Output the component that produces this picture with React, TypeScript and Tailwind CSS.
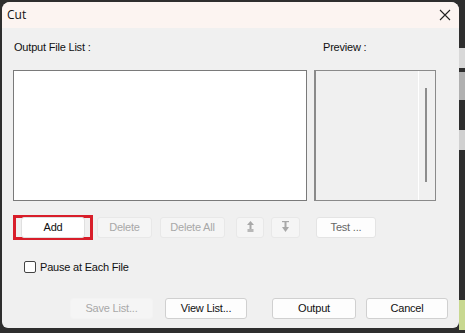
import React from "react";

const font = { fontFamily: '"Liberation Sans", Arial, sans-serif' };

function Btn({
  children,
  disabled,
  className = "",
}: {
  children?: React.ReactNode;
  disabled?: boolean;
  className?: string;
}) {
  return (
    <div
      className={`flex h-[21px] items-center justify-center rounded-[3px] border text-[11px] tracking-[-0.2px] ${
        disabled
          ? "border-[#e8e8e8] bg-[#f5f5f5] text-[#a8a8a8]"
          : "border-[#d0d0d0] bg-[#fdfdfd] text-[#111]"
      } ${className}`}
    >
      {children}
    </div>
  );
}

export default function App() {
  return (
    <div
      className="relative h-[333px] w-[465px] overflow-hidden bg-[#2e2e2e]"
      style={font}
    >
      {/* background desktop bits on the right */}
      <div className="absolute right-0 top-[48px] h-[20px] w-[6px] bg-[#d8d8d8]" />
      <div className="absolute right-0 top-[72px] h-[28px] w-[6px] bg-[#b0b0b0]" />
      <div className="absolute right-0 top-[130px] h-[20px] w-[6px] bg-[#d0d0d0]" />
      <div className="absolute right-0 top-[300px] h-[30px] w-[6px] bg-[#c8d890]" />

      <div className="absolute left-[2px] top-[2px] flex h-[326px] w-[457px] flex-col overflow-hidden rounded-t-[8px] rounded-b-[6px] bg-[#f0f0f0]">
        {/* title bar */}
        <div className="flex h-[26px] items-center justify-between bg-[#fcf4f1] pl-[5px] pr-[8px]">
          <span
            className="text-[12px] text-[#111]"
            style={{ fontFamily: '"Open Sans", "Noto Sans", sans-serif' }}
          >
            Cut
          </span>
          <svg width="12" height="12" viewBox="0 0 12 12">
            <path d="M1 1 L11 11 M11 1 L1 11" stroke="#222" strokeWidth="1.1" />
          </svg>
        </div>

        {/* body */}
        <div className="flex flex-1 flex-col px-[11px]">
          <div className="mt-[11px] flex text-[11px] tracking-[-0.2px] text-[#111]">
            <span className="w-[310px] pl-[1px]">Output File List :</span>
            <span>Preview :</span>
          </div>

          <div className="mt-[14px] flex h-[131px] gap-[7px]">
            <div className="h-full w-[294px] border border-[#7a7a7a] bg-white" />
            <div className="relative h-full w-[122px] border-y border-l-[2px] border-r border-[#8a8a8a] bg-[#f0f0f0]">
              <div className="absolute right-[16px] top-0 h-full w-px bg-white" />
              <div className="absolute right-[8px] top-[17px] h-[94px] w-[2px] bg-[#8c8c8c]" />
            </div>
          </div>

          {/* button row */}
          <div className="mt-[13px] flex h-[27px] items-center">
            <div className="flex h-[25px] w-[80px] items-center justify-center border-[3px] border-[#d81e2a]">
              <Btn className="h-[19px] w-[64px] border-[#e0e0e0] bg-white">Add</Btn>
            </div>
            <Btn disabled className="ml-[4px] w-[55px]">
              Delete
            </Btn>
            <Btn disabled className="ml-[8px] w-[65px]">
              Delete All
            </Btn>
            <Btn disabled className="ml-[11px] w-[28px]">
              <svg width="9" height="14" viewBox="0 0 9 14">
                <path d="M4.5 1 L8 5 L1 5 Z" fill="#a8a8a8" />
                <rect x="3.5" y="5" width="2" height="5" fill="#a8a8a8" />
                <rect x="1.5" y="9" width="6" height="3" fill="#b8b8b8" />
              </svg>
            </Btn>
            <Btn disabled className="ml-[7px] w-[29px]">
              <svg width="9" height="14" viewBox="0 0 9 14">
                <rect x="1" y="1" width="7" height="1.2" fill="#a8a8a8" />
                <rect x="3.5" y="2" width="2" height="5" fill="#a8a8a8" />
                <path d="M1 7 L8 7 L4.5 12 Z" fill="#a8a8a8" />
              </svg>
            </Btn>
            <Btn className="ml-[16px] w-[60px] border-[#e4e4e4] bg-[#f9f9f9] text-[#666]">
              Test ...
            </Btn>
          </div>

          {/* checkbox */}
          <div className="mt-[18px] flex items-center pl-[11px]">
            <div className="h-[12px] w-[12px] rounded-[2px] border border-[#444] bg-white" />
            <span className="ml-[4px] text-[11px] tracking-[-0.2px] text-[#111]">
              Pause at Each File
            </span>
          </div>

          {/* bottom row */}
          <div className="mt-[23px] flex items-center">
            <Btn disabled className="ml-[57px] w-[83px] border-[#f3f3f3]">
              Save List...
            </Btn>
            <Btn className="ml-[12px] w-[82px]">View List...</Btn>
            <Btn className="ml-[25px] w-[84px]">Output</Btn>
            <Btn className="ml-[10px] w-[82px]">Cancel</Btn>
          </div>
        </div>
      </div>
    </div>
  );
}
